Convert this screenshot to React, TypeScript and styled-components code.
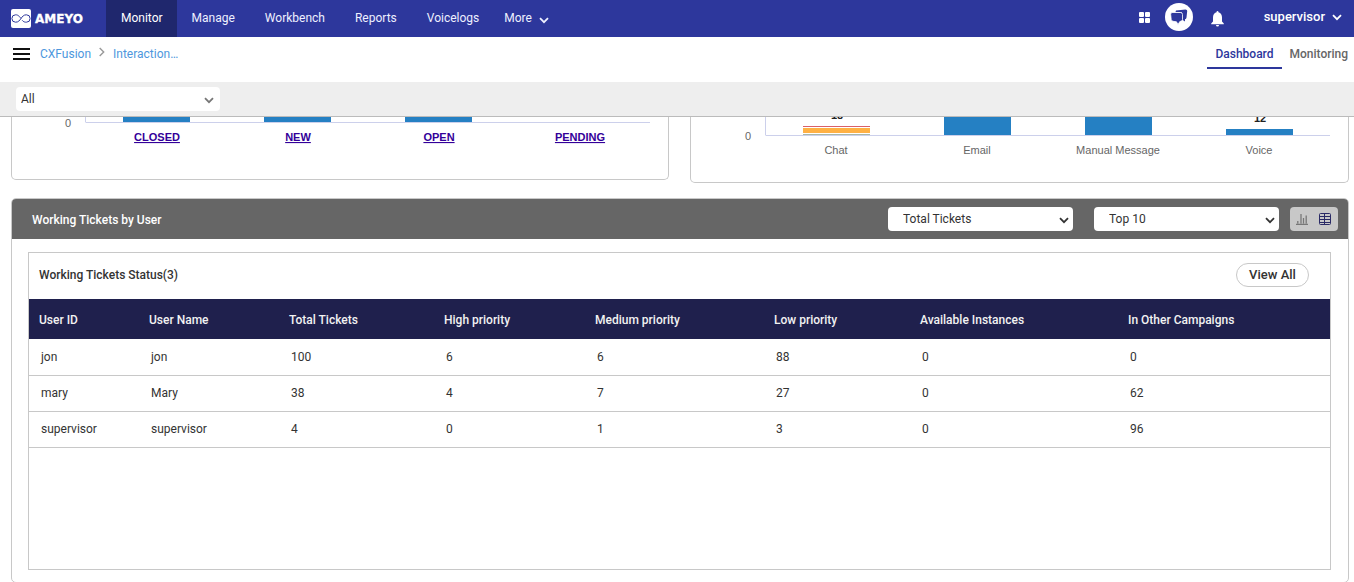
import React, { useState } from "react";
import styled, { createGlobalStyle } from "styled-components";

const GlobalStyle = createGlobalStyle`
  * { box-sizing: border-box; }
  body {
    margin: 0;
    background: #fff;
    color: #333;
    font: 400 12px/16px Roboto, "Liberation Sans", sans-serif;
  }
  button, select { font: inherit; color: inherit; }
`;

const Page = styled.div`
  display: flex;
  flex-direction: column;
  height: 100vh;
`;

const TopBar = styled.header`
  display: flex;
  flex: none;
  height: 37px;
  background: #2d379c;
  color: #fff;
`;

const Logo = styled.a`
  display: block;
  width: 106px;
  padding: 8px 0 0 11px;
`;

const MainNav = styled.nav`
  display: flex;
`;

const NavLink = styled.a<{ $active?: boolean }>`
  display: flex;
  padding: 10px ${(p) => (p.$active ? "14px" : "15px")} 0 15px;
  color: ${(p) => (p.$active ? "#fff" : "#eef0ff")};
  background: ${(p) => (p.$active ? "#1f276d" : "transparent")};
  text-decoration: none;
`;

const MoreButton = styled.button`
  display: flex;
  gap: 7px;
  padding: 10px 10px 0;
  border: 0;
  background: none;
  color: #eef0ff;
  svg { margin-top: 7px; }
`;

const TopActions = styled.div`
  display: flex;
  align-items: center;
  margin-left: auto;
  padding: 0 12px 3px 0;
`;

const IconButton = styled.button`
  display: flex;
  padding: 0;
  border: 0;
  background: none;
  color: #fff;
`;

const AppsButton = styled(IconButton)`
  margin-right: 15px;
`;

const ChatButton = styled(IconButton)`
  align-items: center;
  justify-content: center;
  width: 28px;
  height: 28px;
  margin-right: 18px;
  border-radius: 50%;
  background: #fff;
`;

const BellButton = styled(IconButton)`
  padding-top: 3px;
`;

const UserButton = styled(IconButton)`
  align-items: center;
  gap: 7px;
  margin-left: 40px;
  font-size: 13px;
  font-weight: 500;
`;

const SubHeader = styled.div`
  display: flex;
  flex: none;
  height: 45px;
  padding: 0 6px 0 12px;
`;

const Breadcrumb = styled.nav`
  display: flex;
  gap: 8px;
  margin: 9px 0 0 9px;
  a { color: #4e97dd; text-decoration: none; }
  svg { margin-top: 1px; }
`;

const Tabs = styled.nav`
  display: flex;
  margin-left: auto;
`;

const Tab = styled.a<{ $active?: boolean }>`
  height: 32px;
  padding: 9px ${(p) => (p.$active ? "8px" : "0")} 0;
  margin-left: ${(p) => (p.$active ? "0" : "8px")};
  border-bottom: 2px solid ${(p) => (p.$active ? "#2d379c" : "transparent")};
  color: ${(p) => (p.$active ? "#2d379c" : "#666")};
  font-weight: 500;
  text-decoration: none;
`;

const FilterBar = styled.div`
  flex: none;
  height: 35px;
  padding: 5px 16px 0;
  background: #eee;
  border-bottom: 1px solid #bbb;
`;

const SelectBox = styled.label<{ $wide?: boolean }>`
  display: block;
  position: relative;
  width: ${(p) => (p.$wide ? "204px" : "185px")};
  height: 24px;
  color: #333;
  select {
    display: block;
    appearance: none;
    width: 100%;
    height: 24px;
    padding: 0 24px 0 ${(p) => (p.$wide ? "5px" : "15px")};
    border: 0;
    border-radius: 4px;
    background: #fff;
  }
  svg {
    position: absolute;
    right: ${(p) => (p.$wide ? "6px" : "4px")};
    top: 10px;
    pointer-events: none;
  }
`;

const Content = styled.main`
  flex: 1;
  min-height: 0;
  padding: 0 5px 0 11px;
  overflow-y: auto;
  scrollbar-width: none;
`;

const Charts = styled.div`
  display: grid;
  grid-template-columns: 658fr 659fr;
  gap: 21px;
  align-items: start;
  margin-bottom: 15px;
`;

const ChartCard = styled.section`
  border: 1px solid #c8c8c8;
  border-top: 0;
  border-radius: 0 0 5px 5px;
  svg { display: block; width: 100%; }
  text {
    font: 11px "Liberation Sans", Arial, sans-serif;
    fill: #666;
    text-anchor: middle;
  }
  a text {
    font-weight: 700;
    fill: #330099;
    text-decoration: underline;
  }
  text.value { font-weight: 700; fill: #222; }
`;

const Panel = styled.section`
  border: 1px solid #c8c8c8;
  border-radius: 5px;
  overflow: hidden;
`;

const PanelHeader = styled.header`
  display: flex;
  align-items: center;
  height: 40px;
  padding: 0 10px 0 20px;
  background: #666;
  color: #fff;
  h2 { margin: 0 auto 0 0; padding-top: 2px; font: inherit; font-weight: 500; }
`;

const PanelTools = styled.div`
  display: flex;
  gap: 21px;
`;

const ViewToggle = styled.div`
  display: flex;
  width: 48px;
  height: 24px;
  margin-left: 11px;
  padding-right: 2px;
  border-radius: 4px;
  background: #c8c8c8;
`;

const ToggleButton = styled.button<{ $on?: boolean }>`
  display: flex;
  flex: 1;
  align-items: center;
  justify-content: center;
  padding: 0;
  border: 0;
  background: none;
  color: ${(p) => (p.$on ? "#2a2a66" : "#777")};
`;

const TableBox = styled.div`
  min-height: 318px;
  margin: 13px 17px 12px 16px;
  border: 1px solid #c8c8c8;
`;

const TableTitle = styled.div`
  display: flex;
  align-items: center;
  justify-content: space-between;
  height: 46px;
  padding: 0 21px 2px 10px;
  h3 { margin: 0; font: inherit; font-weight: 500; }
`;

const ViewAll = styled.button`
  width: 73px;
  height: 24px;
  padding: 0;
  border: 1px solid #c8c8c8;
  border-radius: 12px;
  background: #fff;
  font-size: 13px;
  font-weight: 500;
`;

const Table = styled.table`
  width: 100%;
  table-layout: fixed;
  border-spacing: 0;
  text-align: left;
  th {
    height: 40px;
    padding: 2px 0 0 10px;
    background: #1f204d;
    color: #f2f2f2;
    font-weight: 500;
  }
  td {
    height: 36px;
    padding: 0 0 1px 12px;
    border-bottom: 1px solid #c8c8c8;
  }
  tbody tr:first-child td { height: 37px; padding-bottom: 0; }
`;

const Chevron = ({ color = "currentColor" }: { color?: string }) => (
  <svg width="10" height="7" viewBox="0 0 10 7" fill="none" stroke={color} strokeWidth="1.8" aria-hidden="true">
    <path d="M1 1.2 5 5.2 9 1.2" />
  </svg>
);

const AmeyoLogo = () => (
  <svg width="80" height="22" viewBox="0 0 80 22" role="img" aria-label="AMEYO">
    <rect x="0" y="1" width="20" height="19" rx="2" fill="#fff" />
    <path
      d="M10 10.5C7.500 7 6 6.800 4.600 6.800a3.600 3.600 0 0 0 0 7.400C7.500 14.200 8.500 12.500 10 10.500S12.500 6.800 15.400 6.800a3.600 3.600 0 0 1 0 7.400C14 14.200 12.500 14 11.200 12.300"
      fill="none"
      stroke="#2d379c"
    />
    <text x="24" y="15" fill="#fff" stroke="#fff" strokeWidth="0.300" fontFamily="DejaVu Sans" fontWeight="700" fontSize="12">
      AMEYO
    </text>
  </svg>
);

const CENTERS = [71, 212, 353, 494];

function StatusChart() {
  const labels = ["CLOSED", "NEW", "OPEN", "PENDING"];
  return (
    <svg height="62" viewBox="0 0 656 62" preserveAspectRatio="xMinYMin meet">
      <path d="M73.500 0V5.500M74 5.500H638" stroke="#ccd0eb" fill="none" />
      {CENTERS.slice(0, 3).map((c) => (
        <rect key={c} x={c + 40} y="0" width="67" height="5" fill="#2580c3" />
      ))}
      <text x="56" y="10">0</text>
      {labels.map((l, i) => (
        <a key={l} href={"#" + l.toLowerCase()}>
          <text x={CENTERS[i] + 74} y="24">{l}</text>
        </a>
      ))}
    </svg>
  );
}

function ChannelChart() {
  const labels = ["Chat", "Email", "Manual Message", "Voice"];
  return (
    <svg height="65" viewBox="0 0 657 65" preserveAspectRatio="xMinYMin meet">
      <path d="M74.500 0V18.500M75 18.500H639" stroke="#ccd0eb" fill="none" />
      <rect x="112" y="9" width="67" height="1" fill="#d9606a" />
      <rect x="112" y="11" width="67" height="5" fill="#ffb144" />
      <rect x="112" y="17" width="67" height="1" fill="#a9b8a4" />
      <rect x="253" y="0" width="67" height="18" fill="#2580c3" />
      <rect x="394" y="0" width="67" height="18" fill="#2580c3" />
      <rect x="535" y="12" width="67" height="6" fill="#2580c3" />
      <text className="value" x="146" y="2">18</text>
      <text className="value" x="569" y="5">12</text>
      <text x="57" y="23">0</text>
      {labels.map((l, i) => (
        <text key={l} x={CENTERS[i] + 74} y="37">{l}</text>
      ))}
    </svg>
  );
}

const COLUMNS: [string, number][] = [
  ["User ID", 110],
  ["User Name", 140],
  ["Total Tickets", 155],
  ["High priority", 151],
  ["Medium priority", 179],
  ["Low priority", 146],
  ["Available Instances", 208],
  ["In Other Campaigns", 212],
];

const ROWS = [
  ["jon", "jon", 100, 6, 6, 88, 0, 0],
  ["mary", "Mary", 38, 4, 7, 27, 0, 62],
  ["supervisor", "supervisor", 4, 0, 1, 3, 0, 96],
];

export default function App() {
  const [view, setView] = useState("table");
  return (
    <Page>
      <GlobalStyle />
      <TopBar>
        <Logo href="#home"><AmeyoLogo /></Logo>
        <MainNav>
          <NavLink href="#monitor" $active>Monitor</NavLink>
          {["Manage", "Workbench", "Reports", "Voicelogs"].map((n) => (
            <NavLink key={n} href={"#" + n.toLowerCase()}>{n}</NavLink>
          ))}
          <MoreButton>More <Chevron /></MoreButton>
        </MainNav>
        <TopActions>
          <AppsButton aria-label="Apps">
            <svg width="11" height="11" viewBox="0 0 11 11" fill="currentColor">
              <rect x="0" y="0" width="5" height="5" rx="1" />
              <rect x="6" y="0" width="5" height="5" rx="1" />
              <rect x="0" y="6" width="5" height="5" rx="1" />
              <rect x="6" y="6" width="5" height="5" rx="1" />
            </svg>
          </AppsButton>
          <ChatButton aria-label="Chats">
            <svg width="18" height="16" viewBox="0 0 18 16" fill="#2d379c">
              <path d="M6 1.500 15.500 .500Q17.300.500 17.200 2L16.500 8.500Q16.300 10 15 10.300V12.500L12 10.500V5Q12 3 11 3H5.500Z" />
              <path
                d="M2 3.500H10.500Q12.500 3.500 12.500 5.500V10.500Q12.500 12.300 10.500 12.300H10L8 15.500 6.500 12.800 3 12.300Q1.500 12 1.200 10.500L.700 5.500Q.500 3.500 2 3.500Z"
                stroke="#fff"
                strokeWidth="0.800"
              />
            </svg>
          </ChatButton>
          <BellButton aria-label="Notifications">
            <svg width="13" height="16" viewBox="0 0 13 16" fill="currentColor">
              <path d="M6.500 0Q7.500 0 7.500 1.300C10 2 11 4 11 6.500V10.500L12.800 12.500V13.300H.200V12.500L2 10.500V6.500C2 4 3 2 5.500 1.300Q5.500 0 6.500 0ZM5 14H8Q8 15.600 6.500 15.600T5 14Z" />
            </svg>
          </BellButton>
          <UserButton>supervisor <Chevron /></UserButton>
        </TopActions>
      </TopBar>

      <SubHeader>
        <IconButton aria-label="Menu">
          <svg width="19" height="33" viewBox="0 0 19 33" stroke="#111" strokeWidth="2">
            <path d="M1 12H18M1 17H18M1 22H18" />
          </svg>
        </IconButton>
        <Breadcrumb aria-label="Breadcrumb">
          <a href="#cxfusion">CXFusion</a>
          <svg width="6" height="10" viewBox="0 0 6 10" fill="none" stroke="#999" strokeWidth="1.400">
            <path d="M.700 1 4.700 5 .700 9" />
          </svg>
          <a href="#interaction">Interaction…</a>
        </Breadcrumb>
        <Tabs>
          <Tab href="#dashboard" $active>Dashboard</Tab>
          <Tab href="#monitoring">Monitoring</Tab>
        </Tabs>
      </SubHeader>

      <FilterBar>
        <SelectBox $wide>
          <select aria-label="Campaign"><option>All</option></select>
          <Chevron color="#777" />
        </SelectBox>
      </FilterBar>

      <Content>
        <Charts>
          <ChartCard><StatusChart /></ChartCard>
          <ChartCard><ChannelChart /></ChartCard>
        </Charts>

        <Panel>
          <PanelHeader>
            <h2>Working Tickets by User</h2>
            <PanelTools>
              <SelectBox>
                <select aria-label="Metric"><option>Total Tickets</option></select>
                <Chevron />
              </SelectBox>
              <SelectBox>
                <select aria-label="Limit"><option>Top 10</option></select>
                <Chevron />
              </SelectBox>
            </PanelTools>
            <ViewToggle>
              <ToggleButton aria-label="Chart view" onClick={() => setView("chart")} $on={view === "chart"}>
                <svg width="12" height="12" viewBox="0 0 12 12" stroke="currentColor" strokeWidth="1.300">
                  <path d="M0 11.400H12M1.800 10.500V8M5 10.500V1M7.500 10.500V5M10.200 10.500V2.500" />
                </svg>
              </ToggleButton>
              <ToggleButton aria-label="Table view" onClick={() => setView("table")} $on={view === "table"}>
                <svg width="12" height="12" viewBox="0 0 12 12" stroke="currentColor" fill="none">
                  <rect x=".500" y=".500" width="11" height="11" rx="1" />
                  <path d="M0 3.500H12M0 6.500H12M0 9.500H12M5.500 0V12" />
                </svg>
              </ToggleButton>
            </ViewToggle>
          </PanelHeader>

          <TableBox>
            <TableTitle>
              <h3>Working Tickets Status(3)</h3>
              <ViewAll>View All</ViewAll>
            </TableTitle>
            <Table>
              <colgroup>
                {COLUMNS.map(([name, width]) => <col key={name} width={width} />)}
              </colgroup>
              <thead>
                <tr>{COLUMNS.map(([name]) => <th key={name} scope="col">{name}</th>)}</tr>
              </thead>
              <tbody>
                {ROWS.map((row) => (
                  <tr key={row[0]}>{row.map((cell, i) => <td key={i}>{cell}</td>)}</tr>
                ))}
              </tbody>
            </Table>
          </TableBox>
        </Panel>
      </Content>
    </Page>
  );
}
